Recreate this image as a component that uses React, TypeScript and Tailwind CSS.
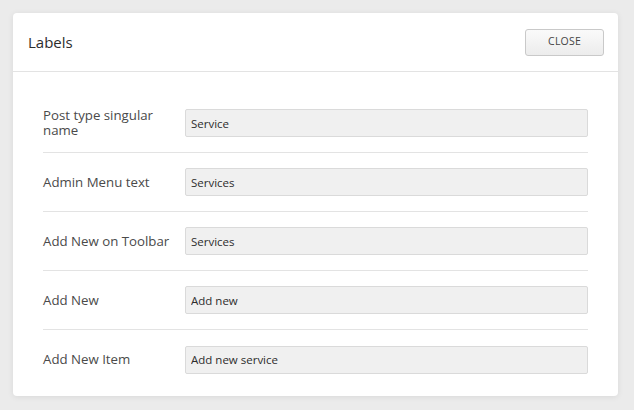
const rows = [
  { label: 'Post type singular name', value: 'Service' },
  { label: 'Admin Menu text', value: 'Services' },
  { label: 'Add New on Toolbar', value: 'Services' },
  { label: 'Add New', value: 'Add new' },
  { label: 'Add New Item', value: 'Add new service' },
]

export default function App() {
  return (
    <div
      className="h-[410px] w-[634px] bg-[#ebebeb] pl-[13px] pt-[13px]"
      style={{ fontFamily: '"Open Sans", "Noto Sans", sans-serif' }}
    >
      <div className="h-[383px] w-[605px] rounded-[4px] bg-white shadow-[0_1px_6px_rgba(0,0,0,0.08)]">
        {/* Header */}
        <div className="flex h-[59px] items-center justify-between border-b border-[#e3e3e3] pl-[15px] pr-[14px]">
          <h2 className="text-[15px] leading-none text-[#2d2d2d]">Labels</h2>
          <button className="h-[27px] w-[79px] rounded-[3px] border border-[#c9c9c9] bg-gradient-to-b from-[#fafafa] to-[#ececec] text-[10.5px] tracking-[0.2px] text-[#444]">
            CLOSE
          </button>
        </div>

        {/* Body */}
        <div className="px-[30px] pt-[22px]">
          {rows.map((row, i) => (
            <div
              key={i}
              className={`flex h-[59px] items-center ${i < rows.length - 1 ? 'border-b border-[#e3e3e3]' : ''}`}
            >
              <label className="w-[142px] shrink-0 pr-[14px] text-[13.25px] leading-[15px] text-[#4a4a4a]">
                {row.label}
              </label>
              <input
                readOnly
                value={row.value}
                className="h-[28px] w-[404px] rounded-[2px] border border-[#dadada] bg-[#f0f0f0] px-[5px] text-[11.5px] text-[#2d2d2d] outline-none"
              />
            </div>
          ))}
        </div>
      </div>
    </div>
  )
}
